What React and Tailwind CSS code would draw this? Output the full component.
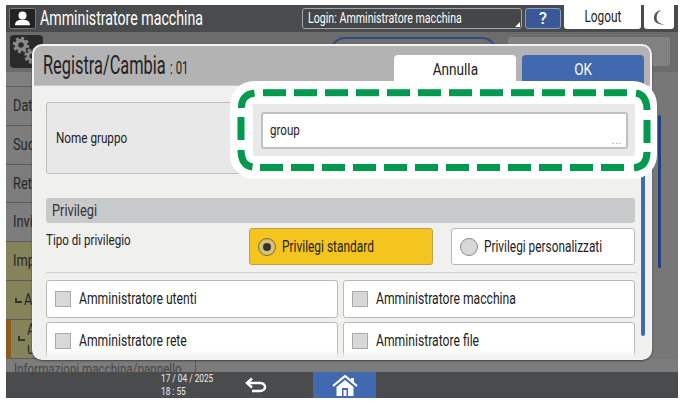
import React from "react"

// condensed panel lettering, sc carries the squeeze for each text size
const T = ({ className = "", sc = "scale-x-[0.8]", children }) => (
  <span className={"inline-block origin-left whitespace-nowrap " + sc + " " + className}>{children}</span>
)

const Gear = () => (
  <svg viewBox="0 0 33 33" className="w-[33px] h-[33px]">
    <rect width="33" height="33" rx="4" fill="#2a2a2a" />
    <circle cx="11" cy="10" r="4.500" fill="none" stroke="#8a8a8a" strokeWidth="3.500" />
    <circle cx="11" cy="10" r="7" fill="none" stroke="#8a8a8a" strokeWidth="2.500" strokeDasharray="3 2.500" />
    <circle cx="22" cy="21" r="4" fill="none" stroke="#8a8a8a" strokeWidth="3" />
    <circle cx="22" cy="21" r="6.500" fill="none" stroke="#8a8a8a" strokeWidth="2.500" strokeDasharray="3 2.100" />
  </svg>
)

const SideRow = ({ label, second, tone = "gray", sub, bar }) => (
  <div
    className={
      "flex items-center h-[39px] border-b border-[#5b5b5b] text-[#262626] " +
      (tone === "olive" ? "bg-[#85835a] " : "bg-[#7d7d7d] ") +
      (bar ? "border-l-[5px] border-l-[#8f5a1e] pl-[5px]" : "pl-[7px]")
    }
  >
    {sub && <span className="w-[7px] h-[5px] border-l-2 border-b-2 border-[#333] mr-[2px] ml-[2px]" />}
    <div className="flex flex-col">
      <T className={second ? "text-[16px] leading-[19px]" : "text-[16px] leading-[16px]"}>{label}</T>
      {second && <T className="text-[16px] leading-[19px]">{second}</T>}
    </div>
  </div>
)

const CheckRow = ({ label }) => (
  <div className="flex-1 h-[38px] flex items-center gap-[8px] pl-[8px] bg-white border border-[#b8b8b8] rounded-[3px]">
    <span className="w-[16px] h-[16px] bg-[#d8d8d8] border border-[#a9a9a9] shrink-0" />
    <T className="text-[16px] text-[#222]" sc="scale-x-[0.76]">{label}</T>
  </div>
)

const GreenFrame = () => {
  const top = Array.from({ length: 12 }, (_, i) => 263 + 31 * i)
  const bottom = Array.from({ length: 12 }, (_, i) => 260 + 31 * i)
  return (
    <svg className="absolute left-0 top-0 pointer-events-none" width="684" height="404" fill="none">
      <rect x="230" y="81" width="427" height="98" rx="24" fill="#fff" />
      <rect x="253" y="104" width="382" height="52" rx="2" fill="#e9e9e9" />
      <g stroke="#009a4e" strokeWidth="7">
        {top.map(x => <path key={x} d={`M${x} 92.7h23`} />)}
        {bottom.map(x => <path key={x} d={`M${x} 167.5h23`} />)}
        <path d="M241 117v23M647 120v23" />
        <path d="M241.500 108C241 99 246 94 254.500 93" />
        <path d="M636 93C643 94 647 100 647 110" />
        <path d="M241 150C241 161 245 166 252.500 167" />
        <path d="M647 152C647 161 643 167 634 168" />
      </g>
    </svg>
  )
}

export default function App() {
  return (
    <div className="relative w-[684px] h-[404px] bg-white overflow-hidden font-['Roboto',sans-serif] pl-[6px] pt-[5px]">
      <div className="w-[672px] h-[393px] flex flex-col">
        {/* top bar */}
        <div className="h-[27px] bg-[#4a4b4c] flex items-start">
          <div className="mt-[3px] ml-[3px] w-[27px] h-[21px] bg-[#222] border border-[#777] rounded-[2px] flex items-center justify-center">
            <svg viewBox="0 0 20 18" className="w-[17px] h-[15px]" fill="#fff">
              <circle cx="10" cy="5.500" r="4.800" />
              <path d="M1 17c0-5 4-6.500 9-6.500s9 1.500 9 6.500z" />
            </svg>
          </div>
          <div className="ml-[4px] w-[262px] h-[27px] flex items-center text-white">
            <T className="text-[21px]" sc="scale-x-[0.675]">Amministratore macchina</T>
          </div>
          <div className="relative mt-[3px] w-[220px] h-[21px] border border-[#a8a8a8] rounded-[3px] bg-[#454647] flex items-center pl-[5px] text-white">
            <T className="text-[14px]" sc="scale-x-[0.76]">Login: Amministratore macchina</T>
            <span className="absolute right-[1px] bottom-[1px] w-0 h-0 border-l-[5px] border-l-transparent border-b-[5px] border-b-white" />
          </div>
          <div className="mt-[3px] ml-[3px] w-[36px] h-[21px] bg-[#3a5796] border border-[#8a9dc2] rounded-[3px] flex items-center justify-center text-white text-[17px] font-medium">?</div>
          <div className="ml-[3px] w-[77px] h-[24px] bg-white rounded-b-[3px] flex items-center justify-center text-[#222]">
            <span className="inline-block scale-x-[0.74] text-[16px]">Logout</span>
          </div>
          <div className="ml-[3px] w-[30px] h-[24px] bg-white rounded-b-[3px] flex items-center justify-center">
            <svg viewBox="0 0 14 18" className="w-[13px] h-[17px]" fill="#555">
              <path d="M9 1C4 2 1 5 1 9.500S5 17 13 16.500c-5-.5-9-2.500-9-7S6 3 9 1z" />
            </svg>
          </div>
        </div>

        {/* dimmed page behind the dialog */}
        <div className="flex-1 bg-[#777777] flex flex-col min-h-0">
          <div className="h-[40px] bg-[#6c6c6c] flex items-start pt-[3px] pl-[4px] shrink-0">
            <Gear />
            <div className="ml-[287px] mt-[2px] w-[167px] h-[30px] border-2 border-[#2c4a8c] rounded-full bg-[#6f6f6f]" />
            <div className="ml-[11px] mt-[2px] w-[162px] h-[29px] bg-[#828282] rounded-[3px]" />
          </div>
          <div className="flex flex-1 min-h-0">
            <div className="w-[190px] flex flex-col overflow-hidden">
              <div className="h-[15px] bg-[#808080] border-b border-[#5b5b5b] shrink-0" />
              <SideRow label="Dati" />
              <SideRow label="Suoni" />
              <SideRow label="Rete" />
              <SideRow label="Invio" />
              <SideRow label="Imp" tone="olive" />
              <SideRow label="A" tone="olive" sub />
              <SideRow label="A" second="u" tone="olive" sub bar />
            </div>
            <div className="flex-1 flex justify-end">
              <div className="w-[3px] h-[153px] mt-[43px] mr-[17px] bg-[#223f80] rounded-full" />
            </div>
          </div>
          <div className="h-[13px] bg-[#7c7c7c] flex overflow-hidden shrink-0 text-[#444]">
            <div className="w-[190px] pl-[8px] border-r border-[#555] leading-[20px]">
              <T className="text-[14px]" sc="scale-x-[0.83]">Informazioni macchina/pannello</T>
            </div>
          </div>
        </div>

        {/* bottom bar */}
        <div className="h-[26px] bg-[#4a4b4c] flex items-stretch shrink-0">
          <div className="ml-[155px] w-[60px] text-[#eee] text-[11.500px] leading-[13px]">
            <T sc="scale-x-[0.72]">17 / 04 / 2025</T>
            <br />
            <T sc="scale-x-[0.72]">18 : 55</T>
          </div>
          <div className="ml-[24px] w-[23px] flex items-center">
            <svg viewBox="0 0 22 16" className="w-[22px] h-[16px]" fill="none" stroke="#fff" strokeWidth="2.500">
              <path d="M7 1.500L2 6l5 4.500" />
              <path d="M2.500 6H15c3 0 5 1.800 5 4s-2 4-5 4H7" />
            </svg>
          </div>
          <div className="ml-[45px] w-[63px] bg-[#4169b0] flex justify-center pt-[3px]">
            <svg viewBox="0 0 26 21" className="w-[26px] h-[21px]">
              <path d="M1 11L13 1l12 10" fill="none" stroke="#fff" strokeWidth="2.200" />
              <path d="M19 3h3v5h-3z" fill="#fff" />
              <path d="M13 5l8.500 7v9h-17v-9z" fill="#fff" />
              <path d="M10 13h6v8h-6z" fill="#4169b0" />
              <path d="M11.500 15h3v6h-3z" fill="#fff" />
            </svg>
          </div>
        </div>
      </div>

      {/* dialog */}
      <div className="absolute left-[32px] top-[44px] w-[620px] h-[316px] rounded-[10px] border-2 border-[#f4f4f4] bg-[#f0f0ee] overflow-hidden flex flex-col shadow-[0_1px_2px_#444]">
        <div className="h-[40px] bg-[#b3b3b3] flex items-end pl-[9px] pr-[6px] shrink-0 border-b border-[#c8c8c8]">
          <div className="flex-1 h-[39px] flex items-center text-[#222]">
            <T className="text-[26px]" sc="scale-x-[0.63]">Registra/Cambia<span className="text-[18px] ml-[7px]">: 01</span></T>
          </div>
          <div className="w-[122px] h-[30px] bg-white rounded-t-[4px] flex items-center justify-center text-[#222]">
            <span className="inline-block scale-x-[0.8] text-[17px]">Annulla</span>
          </div>
          <div className="ml-[6px] w-[122px] h-[30px] bg-[#4169b0] rounded-t-[4px] flex items-center justify-center text-white">
            <span className="inline-block scale-x-[0.8] text-[17px]">OK</span>
          </div>
        </div>
        <div className="flex flex-1 min-h-0">
          <div className="w-[589px] ml-[12px] shrink-0 pt-[16px] flex flex-col">
            <div className="h-[72px] bg-[#e8e8e8] border border-[#bdbdbd] rounded-[3px] flex items-center pl-[9px] text-[#222] shrink-0">
              <T className="text-[15px]" sc="scale-x-[0.78]">Nome gruppo</T>
            </div>
            <div className="mt-[24px] h-[25px] bg-[#c8c9ca] rounded-[3px] flex items-center pl-[6px] text-[#333] shrink-0">
              <T className="text-[16px]">Privilegi</T>
            </div>
            <div className="mt-[5px] h-[37px] flex shrink-0">
              <div className="w-[203px] text-[#222]">
                <T className="text-[14.500px]">Tipo di privilegio</T>
              </div>
              <div className="w-[184px] bg-[#f5c51f] border border-[#b9a24a] rounded-[3px] flex items-center gap-[6px] pl-[8px] text-[#222]">
                <span className="w-[18px] h-[18px] rounded-full border border-[#7a6a30] bg-[#d6c276] flex items-center justify-center shrink-0">
                  <span className="w-[8px] h-[8px] rounded-full bg-[#333]" />
                </span>
                <T className="text-[16px]" sc="scale-x-[0.745]">Privilegi standard</T>
              </div>
              <div className="ml-[18px] w-[184px] bg-white border border-[#b8b8b8] rounded-[3px] flex items-center gap-[6px] pl-[8px] text-[#222]">
                <span className="w-[18px] h-[18px] rounded-full border border-[#888] bg-[#d8d8d8] shrink-0" />
                <T className="text-[16px]" sc="scale-x-[0.74]">Privilegi personalizzati</T>
              </div>
            </div>
            <div className="mt-[7px] w-[591px] h-[1px] bg-[#d0d0d0] shrink-0" />
            <div className="mt-[7px] flex gap-[5px] shrink-0">
              <CheckRow label="Amministratore utenti" />
              <CheckRow label="Amministratore macchina" />
            </div>
            <div className="mt-[4px] flex gap-[5px] shrink-0">
              <CheckRow label="Amministratore rete" />
              <CheckRow label="Amministratore file" />
            </div>
          </div>
          <div className="ml-[6px] mt-[4px] w-[4px] h-[246px] bg-[#4169b0] rounded-full shrink-0" />
        </div>
        <div className="absolute left-0 right-0 bottom-0 h-[8px] bg-gradient-to-b from-transparent to-[#f0f0ee]" />
      </div>

      {/* callout round the name field */}
      <GreenFrame />
      <div className="absolute left-[261px] top-[112px] w-[367px] h-[37px] bg-white border-2 border-[#c0c0c0] rounded-[3px] flex items-center pl-[7px] text-[#222]">
        <T className="text-[14.500px]">group</T>
        <span className="absolute right-[4px] bottom-[2px] text-[11px] leading-[9px] text-[#999] tracking-[0.5px]">...</span>
      </div>
    </div>
  )
}
